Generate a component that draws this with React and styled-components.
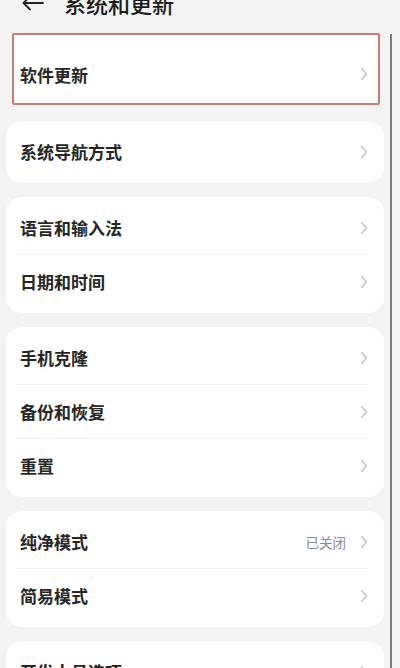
import React from 'react';
import styled, { createGlobalStyle } from 'styled-components';

const GlobalStyle = createGlobalStyle`
  html, body {
    margin: 0;
    padding: 0;
    background: #f3f3f3;
    overflow: hidden;
  }
  body {
    font-family: "Noto Sans CJK SC", "Noto Sans", sans-serif;
  }
`;

const Screen = styled.div`
  position: relative;
  width: 400px;
  height: 668px;
  overflow: hidden;
  background: #f3f3f3;
`;

const Header = styled.header`
  display: flex;
  align-items: center;
  gap: 20px;
  height: 22px;
  margin-top: -8px;
  padding: 0 0 0 22px;
  color: #1a1a1a;
`;

const Title = styled.h1`
  margin: 0;
  font-size: 22px;
  line-height: 22px;
  font-weight: 500;
`;

const List = styled.div`
  display: flex;
  flex-direction: column;
  gap: 14px;
  padding: 19px 16px 0 6px;
`;

const Card = styled.section`
  background: #fff;
  border-radius: 16px;
  padding: 4px 0 5px;
  overflow: hidden;
`;

const Highlight = styled.section`
  background: #fff;
  margin: 0 4px 2px 6px;
  border: 2px solid #c97a73;
  border-radius: 2px;
  padding: 10px 0 0;
  height: 58px;
  display: flex;
  align-items: center;
`;

const Row = styled.div`
  display: flex;
  align-items: center;
  height: 53px;
  padding: ${({ $boxed }) => ($boxed ? '0 10px 0 6px' : '0 16px 0 14px')};
  box-sizing: border-box;
  width: 100%;
`;

const Label = styled.span`
  flex: 1;
  font-size: 17px;
  font-weight: 600;
  color: #262626;
`;

const Value = styled.span`
  font-size: 13.5px;
  color: #8a8a8a;
  margin-right: 14px;
`;

const Scrollbar = styled.div`
  position: absolute;
  left: 390px;
  top: 34px;
  bottom: 0;
  width: 2px;
  background: #7d7d7d;
`;

const Divider = styled.div`
  height: 1px;
  background: #f1f1f1;
  margin: 0 16px 0 10px;
`;

const Chevron = () => (
  <svg width="8" height="14" viewBox="0 0 8 14" fill="none">
    <path d="M1.5 1.5 L6.5 7 L1.5 12.5" stroke="#c2c2c2" strokeWidth="1.4" strokeLinecap="round" strokeLinejoin="round" />
  </svg>
);

const BackArrow = () => (
  <svg width="22" height="16" viewBox="0 0 22 16" fill="none">
    <path d="M21 8 H2 M8 1.5 L1.5 8 L8 14.5" stroke="#222" strokeWidth="1.8" strokeLinecap="round" strokeLinejoin="round" />
  </svg>
);

const groups = [
  [{ label: '系统导航方式' }],
  [{ label: '语言和输入法' }, { label: '日期和时间' }],
  [{ label: '手机克隆' }, { label: '备份和恢复' }, { label: '重置' }],
  [{ label: '纯净模式', value: '已关闭' }, { label: '简易模式' }],
  [{ label: '开发人员选项' }, { label: '关于本机' }],
];

const Item = ({ label, value, boxed }) => (
  <Row $boxed={boxed}>
    <Label>{label}</Label>
    {value && <Value>{value}</Value>}
    <Chevron />
  </Row>
);

export default function App() {
  return (
    <Screen>
      <GlobalStyle />
      <Header>
        <BackArrow />
        <Title>系统和更新</Title>
      </Header>
      <List>
        <Highlight>
          <Item label="软件更新" boxed />
        </Highlight>
        {groups.map((items, i) => (
          <Card key={i}>
            {items.map((it, j) => (
              <React.Fragment key={it.label}>
                {j > 0 && <Divider />}
                <Item {...it} />
              </React.Fragment>
            ))}
          </Card>
        ))}
      </List>
      <Scrollbar />
    </Screen>
  );
}
